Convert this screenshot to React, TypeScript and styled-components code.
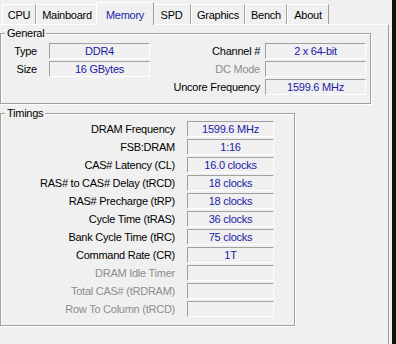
import React from 'react';
import styled, { createGlobalStyle } from 'styled-components';

interface TabInfo {
    name: string;
    width: number;
}

interface Pair {
    label: string;
    value?: string;
    disabled?: boolean;
}

const tabs: TabInfo[] = [
    { name: 'CPU', width: 34 },
    { name: 'Mainboard', width: 62 },
    { name: 'Memory', width: 54 },
    { name: 'SPD', width: 39 },
    { name: 'Graphics', width: 54 },
    { name: 'Bench', width: 42 },
    { name: 'About', width: 42 }
];

const timings: Pair[] = [
    { label: 'DRAM Frequency', value: '1599.6 MHz' },
    { label: 'FSB:DRAM', value: '1:16' },
    { label: 'CAS# Latency (CL)', value: '16.0 clocks' },
    { label: 'RAS# to CAS# Delay (tRCD)', value: '18 clocks' },
    { label: 'RAS# Precharge (tRP)', value: '18 clocks' },
    { label: 'Cycle Time (tRAS)', value: '36 clocks' },
    { label: 'Bank Cycle Time (tRC)', value: '75 clocks' },
    { label: 'Command Rate (CR)', value: '1T' },
    { label: 'DRAM Idle Timer', disabled: true },
    { label: 'Total CAS# (tRDRAM)', disabled: true },
    { label: 'Row To Column (tRCD)', disabled: true }
];

export default function App() {
    const active = 'Memory';

    return (
        <>
            <GlobalStyle />
            <Window>
                <Main>
                    <TabStrip>
                        {tabs.map((t) => (
                            <Tab key={t.name} $width={t.width} $active={t.name === active}>
                                {t.name}
                            </Tab>
                        ))}
                    </TabStrip>
                    <Panel>
                        <GeneralGroup>
                            <Legend>General</Legend>
                            <GeneralGrid>
                                <Label $pad={12}>Type</Label>
                                <Field>DDR4</Field>
                                <Label $pad={5}>Channel #</Label>
                                <Field>2 x 64-bit</Field>

                                <Label $pad={12}>Size</Label>
                                <Field>16 GBytes</Field>
                                <Label $pad={5} $disabled>DC Mode</Label>
                                <Field />

                                <Label $pad={12} />
                                <span />
                                <Label $pad={5}>Uncore Frequency</Label>
                                <Field>1599.6 MHz</Field>
                            </GeneralGrid>
                        </GeneralGroup>

                        <TimingsGroup>
                            <Legend>Timings</Legend>
                            <TimingsGrid>
                                {timings.map((t) => (
                                    <React.Fragment key={t.label}>
                                        <Label $pad={12} $disabled={t.disabled}>{t.label}</Label>
                                        <Field>{t.value}</Field>
                                    </React.Fragment>
                                ))}
                            </TimingsGrid>
                        </TimingsGroup>
                    </Panel>
                </Main>
                <Edge />
            </Window>
        </>
    );
}

const GlobalStyle = createGlobalStyle`
    html, body {
        margin: 0;
        padding: 0;
        background: #f0f0f0;
    }
    body {
        font-family: "Liberation Sans", Arial, sans-serif;
        font-size: 11px;
        letter-spacing: -0.25px;
        color: #000;
    }
`;

const Window = styled.div`
    display: flex;
    width: 396px;
    height: 344px;
    overflow: hidden;
`;

const Main = styled.div`
    width: 392px;
    display: flex;
    flex-direction: column;
`;

const Edge = styled.div`
    flex: 1;
    background: #111;
`;

const TabStrip = styled.div`
    height: 24px;
    display: flex;
    align-items: flex-end;
    padding-left: 2px;
`;

const Tab = styled.div<{ $width: number; $active?: boolean }>`
    position: relative;
    z-index: ${(p) => (p.$active ? 2 : 1)};
    box-sizing: border-box;
    width: ${(p) => p.$width + (p.$active ? 4 : 0)}px;
    height: ${(p) => (p.$active ? 23 : 20)}px;
    margin: ${(p) => (p.$active ? '0 -2px -1px' : '0')};
    padding-top: ${(p) => (p.$active ? 6 : 4)}px;
    border-top: 1px solid #fff;
    border-left: 1px solid #fff;
    border-right: 1px solid #a0a0a0;
    background: #f0f0f0;
    line-height: 13px;
    text-align: center;
    color: ${(p) => (p.$active ? '#1a1aa6' : '#000')};
    white-space: nowrap;
`;

const Panel = styled.div`
    flex: 1;
    width: 389px;
    box-sizing: border-box;
    border-top: 1px solid #fff;
    border-right: 1px solid #a0a0a0;
    padding-top: 2px;
`;

const Group = styled.fieldset`
    box-sizing: border-box;
    margin: 0;
    min-width: 0;
    border: 1px solid #a0a0a0;
    box-shadow: 1px 1px 0 #fff, inset 1px 1px 0 #fff;
`;

const GeneralGroup = styled(Group)`
    width: 371px;
    height: 77px;
    padding: 3px 4px 8px 0;
`;

const TimingsGroup = styled(Group)`
    width: 295px;
    margin-top: 3px;
    padding: 1px 0 8px 0;
`;

const Legend = styled.legend`
    margin-left: 4px;
    padding: 0 2px;
    line-height: 13px;
    background: #f0f0f0;
`;

const GeneralGrid = styled.div`
    display: grid;
    grid-template-columns: 48px 101px 1fr 101px;
    grid-auto-rows: 16px;
    row-gap: 2px;
`;

const TimingsGrid = styled.div`
    display: grid;
    grid-template-columns: 186px 87px;
    grid-auto-rows: 16px;
    row-gap: 2px;
`;

const Label = styled.div<{ $pad: number; $disabled?: boolean }>`
    padding-right: ${(p) => p.$pad}px;
    text-align: right;
    line-height: 16px;
    white-space: nowrap;
    color: ${(p) => (p.$disabled ? '#8d8d8d' : '#000')};
`;

const Field = styled.div`
    box-sizing: border-box;
    height: 16px;
    border-top: 1px solid #a0a0a0;
    border-left: 1px solid #a0a0a0;
    border-bottom: 1px solid #fff;
    border-right: 1px solid #fff;
    line-height: 14px;
    text-align: center;
    color: #1a1aa6;
    white-space: nowrap;
`;
